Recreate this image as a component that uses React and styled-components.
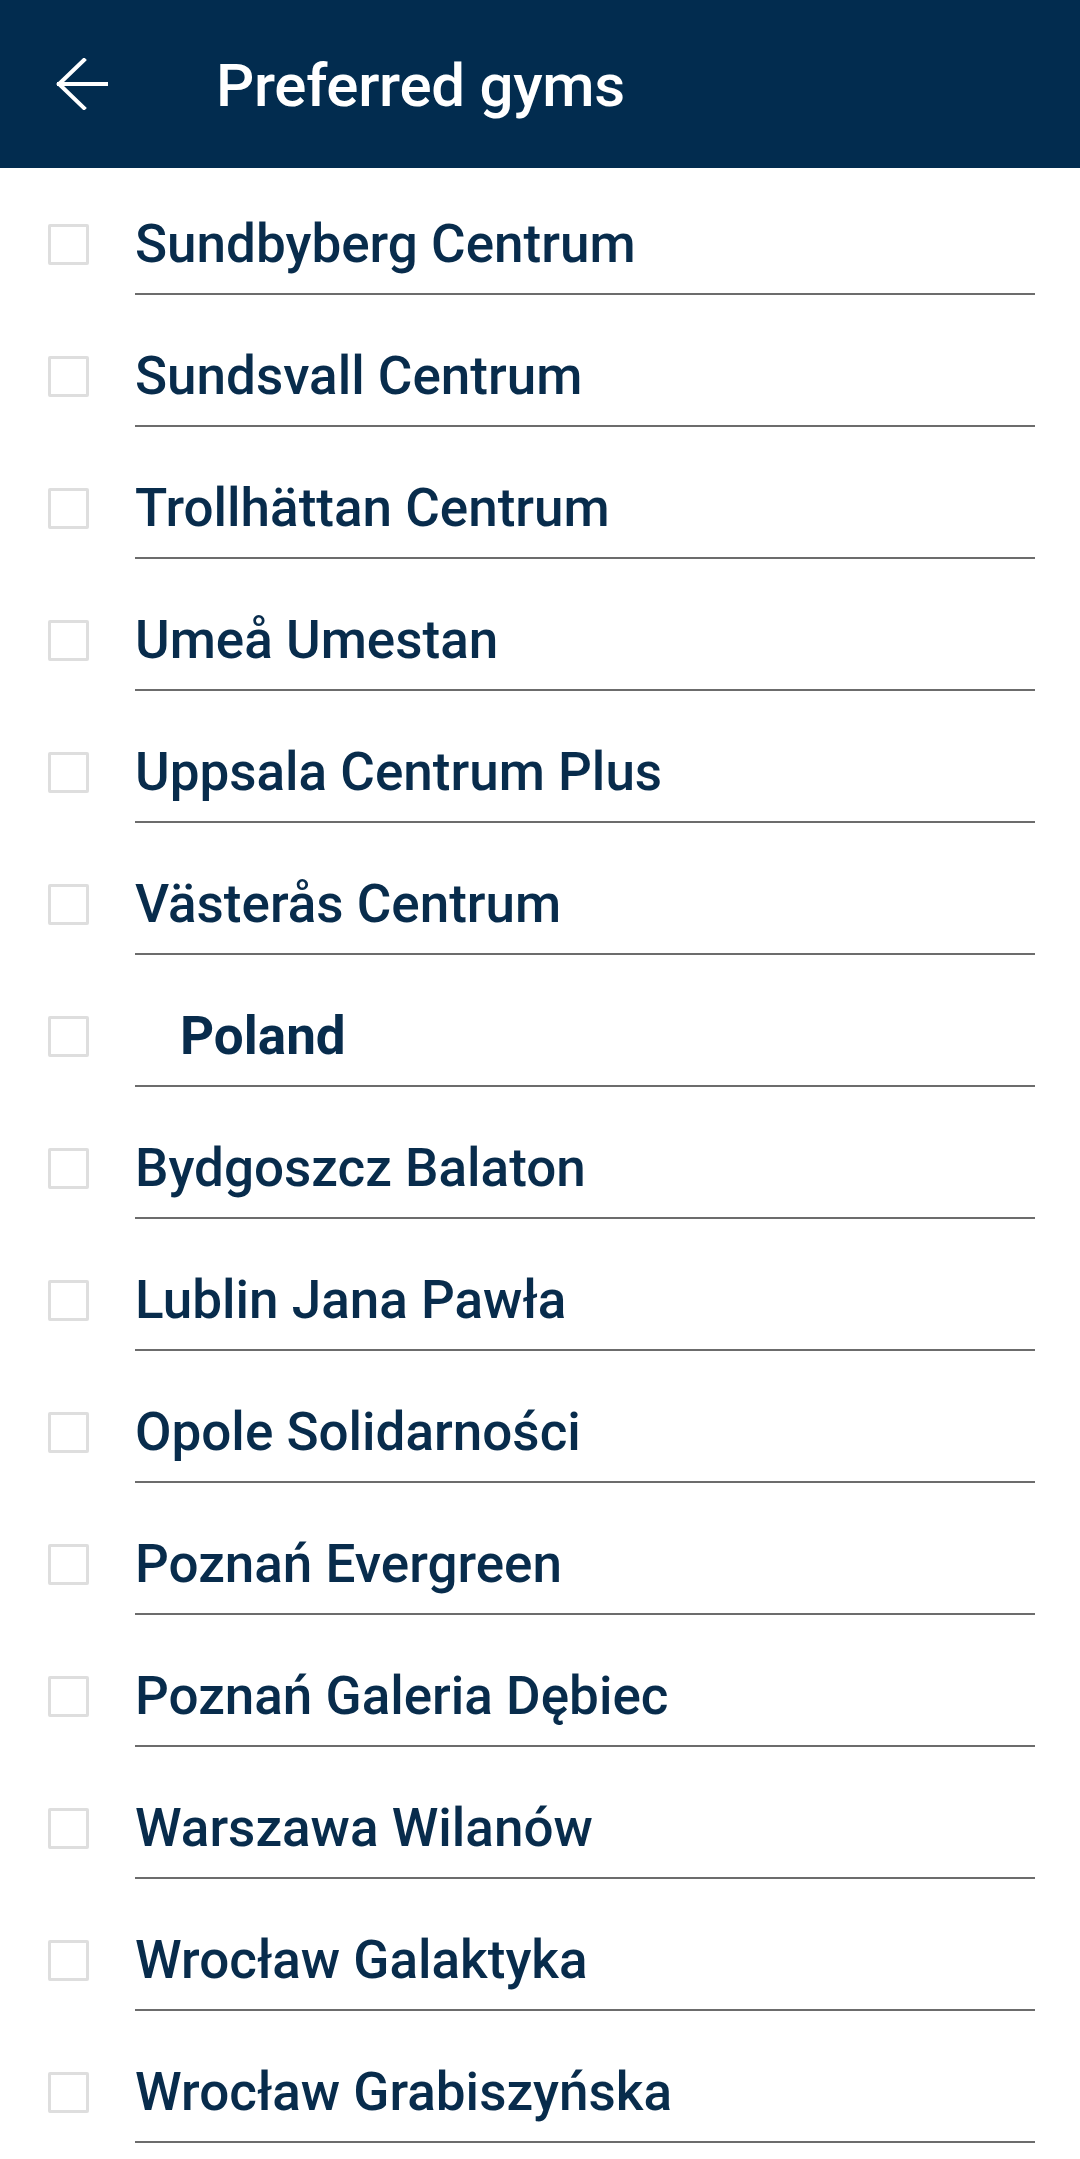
import React from 'react';
import styled, { createGlobalStyle } from 'styled-components';

const GlobalStyle = createGlobalStyle`
  html, body {
    margin: 0;
    padding: 0;
    background: #ffffff;
    font-family: Roboto, "Liberation Sans", Arial, sans-serif;
  }
  * { box-sizing: border-box; }
`;

const Page = styled.div`
  width: 1080px;
  min-height: 2159px;
  overflow: hidden;
  background: #ffffff;
`;

const Header = styled.header`
  position: relative;
  z-index: 2;
  height: 168px;
  background-color: #022c4f;
  display: flex;
  align-items: center;
  padding-left: 56px;
  gap: 108px;
`;

const BackButton = styled.button`
  width: 52px;
  height: 52px;
  padding: 0;
  border: none;
  background: transparent;
  display: flex;
  align-items: center;
  justify-content: center;
  cursor: pointer;
`;

const Title = styled.h1`
  margin: 0;
  color: #ffffff;
  font-size: 60px;
  font-weight: 500;
  letter-spacing: -0.3px;
  line-height: 1;
  padding-top: 4px;
`;

// the list is scrolled a few px under the toolbar
const List = styled.ul`
  list-style: none;
  margin: -5px 0 0;
  padding: 0;
`;

const Row = styled.li`
  display: flex;
  height: 132px;
  cursor: pointer;
`;

const CheckCell = styled.div`
  width: 135px;
  display: flex;
  align-items: center;
  padding: 32px 0 2px 48px;
`;

const CheckBox = styled.span`
  display: block;
  width: 41px;
  height: 41px;
  border: 3px solid #dedede;
  border-radius: 2px;
  background: #ffffff;
`;

const Label = styled.div`
  flex: 1;
  margin-right: 45px;
  border-bottom: 2px solid #6c6c6c;
  display: flex;
  align-items: center;
  padding-top: 32px;
  padding-left: ${props => (props.heading ? '45px' : '0')};
  color: #082c4c;
  font-size: 53px;
  font-weight: ${props => (props.heading ? 700 : 500)};
  white-space: nowrap;
`;

const gyms = [
  { name: 'Sundbyberg Centrum' },
  { name: 'Sundsvall Centrum' },
  { name: 'Trollhättan Centrum' },
  { name: 'Umeå Umestan' },
  { name: 'Uppsala Centrum Plus' },
  { name: 'Västerås Centrum' },
  { name: 'Poland', heading: true },
  { name: 'Bydgoszcz Balaton' },
  { name: 'Lublin Jana Pawła' },
  { name: 'Opole Solidarności' },
  { name: 'Poznań Evergreen' },
  { name: 'Poznań Galeria Dębiec' },
  { name: 'Warszawa Wilanów' },
  { name: 'Wrocław Galaktyka' },
  { name: 'Wrocław Grabiszyńska' },
];

const BackArrow = () => (
  <svg width="52" height="52" viewBox="0 0 52 52" fill="none">
    <path
      d="M3 26 H50 M28 2 L3 26 L28 50"
      stroke="#ffffff"
      strokeWidth="4"
      strokeLinecap="square"
      strokeLinejoin="miter"
    />
  </svg>
);

const App = () => {
  return (
    <Page>
      <GlobalStyle />
      <Header>
        <BackButton aria-label="Back">
          <BackArrow />
        </BackButton>
        <Title>Preferred gyms</Title>
      </Header>

      <List>
        {gyms.map(gym => (
          <Row key={gym.name}>
            <CheckCell>
              <CheckBox />
            </CheckCell>
            <Label heading={gym.heading}>{gym.name}</Label>
          </Row>
        ))}
      </List>
    </Page>
  );
};

export default App;
